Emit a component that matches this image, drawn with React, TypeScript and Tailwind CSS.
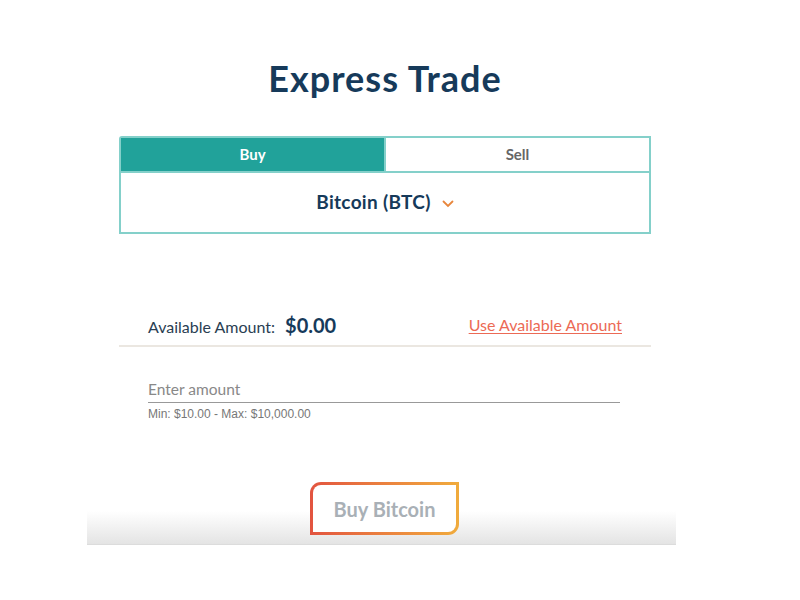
import { useState } from 'react';

const heading = "font-['Lato','Noto_Sans',sans-serif]";

export default function App() {
  const [side, setSide] = useState<'buy' | 'sell'>('buy');
  const [amount, setAmount] = useState('');

  return (
    <div className="w-[800px] h-[600px] bg-white overflow-hidden">
      <h1 className={`${heading} pt-[55px] mx-[119px] w-[532px] text-center text-[36px] leading-[46px] tracking-[1px] font-bold text-[#163a5a]`}>
        Express Trade
      </h1>

      {/* buy / sell switch with asset picker */}
      <div className="mt-[35px] mx-[119px] w-[532px] border-2 border-[#84d0ca] rounded-tl-[3px]">
        <div className="flex h-[35px] border-b-2 border-[#84d0ca]">
          <button
            onClick={() => setSide('buy')}
            className={`${heading} flex-1 text-[15px] font-bold ${side === 'buy' ? 'bg-[#21a29a] text-white' : 'bg-white text-[#666]'}`}
          >
            Buy
          </button>
          <button
            onClick={() => setSide('sell')}
            className={`${heading} flex-1 text-[15px] font-bold border-l-2 border-[#84d0ca] ${side === 'sell' ? 'bg-[#21a29a] text-white' : 'bg-white text-[#666]'}`}
          >
            Sell
          </button>
        </div>
        <div className="h-[59px] flex items-center justify-center gap-[11px]">
          <span className={`${heading} text-[19px] tracking-[0.3px] font-bold text-[#163a5a]`}>Bitcoin (BTC)</span>
          <svg width="12" height="8" viewBox="0 0 12 8" className="mt-[2px]">
            <path d="M1.5 1.5 6 6l4.5-4.5" fill="none" stroke="#e8863c" strokeWidth="1.8" strokeLinecap="round" />
          </svg>
        </div>
      </div>

      <div className="mt-[71px] mx-[119px] w-[532px]">
        <div className="flex items-center justify-between px-[29px] h-[42px] border-b-2 border-[#ebe7e1]">
          <div className="flex items-baseline gap-[10px]">
            <span className={`${heading} text-[16px] text-[#2a3e52]`}>Available Amount:</span>
            <span className={`${heading} text-[20px] font-bold text-[#163a5a]`}>$0.00</span>
          </div>
          <a className={`${heading} text-[16px] text-[#ec6a55] underline underline-offset-2 cursor-pointer`}>
            Use Available Amount
          </a>
        </div>

        <div className="mx-[29px] mt-[29px]">
          <input
            value={amount}
            onChange={(e) => setAmount(e.target.value)}
            placeholder="Enter amount"
            className={`${heading} w-[472px] h-[27px] text-[15.5px] text-[#333] placeholder:text-[#888] border-b border-[#999] outline-none bg-transparent`}
          />
          <p className="mt-[2px] font-['Liberation_Sans',Arial,sans-serif] text-[12px] text-[#777]">
            Min: $10.00 - Max: $10,000.00
          </p>
        </div>
      </div>

      {/* footer strip holding the submit button */}
      <div className="relative mt-[59px] ml-[87px] w-[589px] h-[63px]">
        <div className="absolute left-0 right-0 bottom-0 h-[34px] bg-gradient-to-b from-white to-[#e4e4e4] border-b border-[#dcdcdc]" />
        <div className="relative flex justify-center">
          <div className="ml-[6px] p-[3px] rounded-tl-[11px] rounded-br-[11px] bg-gradient-to-r from-[#e2533f] to-[#f0ab3c]">
            <button className={`${heading} w-[143px] h-[47px] bg-white rounded-tl-[8px] rounded-br-[8px] text-[20px] font-bold text-[#a9b0b6]`}>
              Buy Bitcoin
            </button>
          </div>
        </div>
      </div>
    </div>
  );
}
